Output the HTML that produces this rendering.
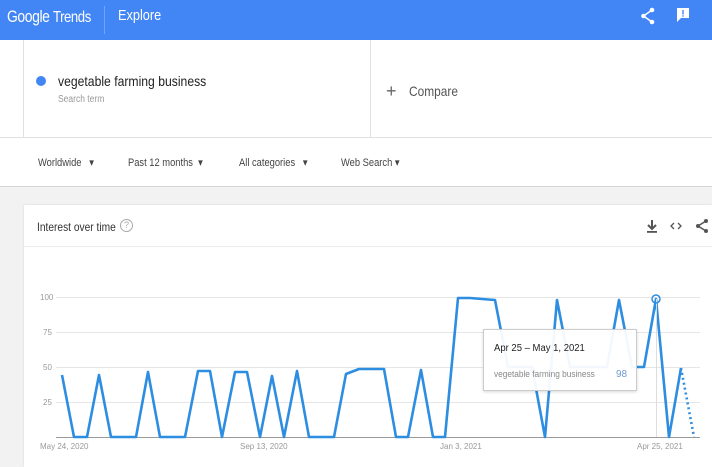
<!DOCTYPE html>
<html><head><style>
body{margin:0;width:712px;height:467px;overflow:hidden;background:#f2f2f2;font-family:"Liberation Sans",sans-serif;position:relative}
.a{position:absolute}
.c{transform:scaleX(.85);transform-origin:0 0;white-space:nowrap}
</style></head><body>
<div class="a" style="left:0;top:0;width:712px;height:40px;background:#4285f4;box-shadow:0 1px 2px rgba(0,0,0,.2)">
 <div class="a c" style="left:7px;top:7px;color:#fff;font-size:17px;letter-spacing:-0.5px;transform:scaleX(.82)">Google <span style="font-size:16px">Trends</span></div>
 <div class="a" style="left:104px;top:6px;width:1px;height:28px;background:rgba(255,255,255,.25)"></div>
 <div class="a c" style="left:118px;top:7px;color:#fff;font-size:15px">Explore</div>
 <svg class="a" style="left:640px;top:7px" width="16" height="18" viewBox="0 0 16 18"><circle cx="12" cy="3" r="2.3" fill="#fff"/><circle cx="3.5" cy="9" r="2.3" fill="#fff"/><circle cx="12" cy="15" r="2.3" fill="#fff"/><path d="M12 3L3.5 9L12 15" stroke="#fff" stroke-width="1.5" fill="none"/></svg>
 <svg class="a" style="left:676px;top:7px" width="14" height="16" viewBox="0 0 14 16"><path d="M1 1h12v10H5l-4 4z" fill="#fff"/><rect x="6.3" y="3" width="1.4" height="4.5" fill="#4285f4"/><rect x="6.3" y="8.3" width="1.4" height="1.4" fill="#4285f4"/></svg>
</div>
<div class="a" style="left:0;top:40px;width:712px;height:146px;background:#fff;border-bottom:1px solid #d6d6d6"></div>
<div class="a" style="left:23px;top:40px;width:1px;height:97px;background:#e0e0e0"></div>
<div class="a" style="left:370px;top:40px;width:1px;height:97px;background:#e0e0e0"></div>
<div class="a" style="left:0;top:137px;width:712px;height:1px;background:#e0e0e0"></div>
<div class="a" style="left:36px;top:76px;width:10px;height:10px;border-radius:50%;background:#4285f4"></div>
<div class="a c" style="left:58px;top:73px;font-size:14px;color:#222;transform:scaleX(.87)">vegetable farming business</div>
<div class="a c" style="left:58px;top:94px;font-size:10px;color:#999">Search term</div>
<div class="a" style="left:386px;top:81px;font-size:18px;color:#666;font-weight:300">+</div>
<div class="a c" style="left:409px;top:83px;font-size:14px;color:#555">Compare</div>
<div class="a c" style="left:38px;top:156px;font-size:11px;color:#444">Worldwide&nbsp;&nbsp;&nbsp;▾</div>
<div class="a c" style="left:128px;top:156px;font-size:11px;color:#444">Past 12 months&nbsp;&nbsp;▾</div>
<div class="a c" style="left:239px;top:156px;font-size:11px;color:#444">All categories&nbsp;&nbsp;&nbsp;▾</div>
<div class="a c" style="left:341px;top:156px;font-size:11px;color:#444">Web Search&nbsp;▾</div>
<div class="a" style="left:24px;top:205px;width:688px;height:262px;background:#fff;box-shadow:0 0 2px rgba(0,0,0,.12)"></div>
<div class="a" style="left:24px;top:246px;width:688px;height:1px;background:#ececec"></div>
<div class="a c" style="left:37px;top:220px;font-size:12px;color:#333">Interest over time</div>
<div class="a" style="left:120px;top:219px;width:11px;height:11px;border:1px solid #aaa;border-radius:50%;font-size:9px;color:#aaa;text-align:center;line-height:11px">?</div>
<svg class="a" style="left:640px;top:216px" width="72" height="20" viewBox="0 0 72 20">
 <path d="M12 4v8M8 9l4 4 4-4" stroke="#555" stroke-width="2" fill="none"/><rect x="7" y="15" width="10" height="1.8" fill="#555"/>
 <path d="M34 7l-3 3 3 3M38 7l3 3-3 3" stroke="#555" stroke-width="1.3" fill="none"/>
 <circle cx="66" cy="5" r="2" fill="#555"/><circle cx="58" cy="10" r="2" fill="#555"/><circle cx="66" cy="15" r="2" fill="#555"/><path d="M66 5L58 10L66 15" stroke="#555" stroke-width="1.5" fill="none"/>
</svg>
<svg class="a" style="left:0;top:0" width="712" height="467">
 <g stroke="#e6e6e6" stroke-width="1"><line x1="56" y1="297.5" x2="700" y2="297.5"/><line x1="56" y1="332.5" x2="700" y2="332.5"/><line x1="56" y1="367.5" x2="700" y2="367.5"/><line x1="56" y1="402.5" x2="700" y2="402.5"/></g>
 <line x1="56" y1="437.5" x2="700" y2="437.5" stroke="#999"/>
 <g font-family="Liberation Sans" font-size="8" fill="#999"><text x="40" y="300">100</text><text x="43" y="335">75</text><text x="43" y="370">50</text><text x="43" y="405">25</text>
 <text x="40" y="449">May 24, 2020</text><text x="240" y="449">Sep 13, 2020</text><text x="440" y="449">Jan 3, 2021</text><text x="637" y="449">Apr 25, 2021</text></g>
 <polyline fill="none" stroke="#2d8de0" stroke-width="2.6" stroke-linejoin="round" points="62,375 74,437 87,437 99,375 111,437 136,437 148,372 160,437 185,437 198,371 210,371 222,437 235,372 247,372 260,437 272,376 284,437 297,371 309,437 334,437 346,374 359,369 384,369 396,437 408,437 421,370 433,437 445,437 458,298 470,298 482,299 495,300 508,367 520,367 532,367 545,437 557,300 570,367 582,367 595,367 607,367 619,300 632,367 644,367 656,299 669,437 681,368"/>
 <polyline fill="none" stroke="#2d8de0" stroke-width="2.6" stroke-dasharray="2,3" points="681,368 694,437"/>
 <line x1="656.5" y1="299" x2="656.5" y2="437" stroke="#ddd"/>
 <circle cx="656" cy="299" r="4" fill="none" stroke="#2d8de0" stroke-width="1.5"/>
</svg>
<div class="a" style="left:483px;top:329px;width:152px;height:60px;background:rgba(255,255,255,.94);border:1px solid #ccc;box-shadow:0 1px 3px rgba(0,0,0,.15)">
 <div class="a c" style="left:10px;top:13px;font-size:10px;color:#222;transform:scaleX(.95)">Apr 25 – May 1, 2021</div>
 <div class="a c" style="left:10px;top:39px;font-size:9px;color:#888;transform:scaleX(.92)">vegetable farming business</div>
 <div class="a" style="left:132px;top:39px;font-size:10px;color:#6c9bd2">98</div>
</div>
</body></html>
